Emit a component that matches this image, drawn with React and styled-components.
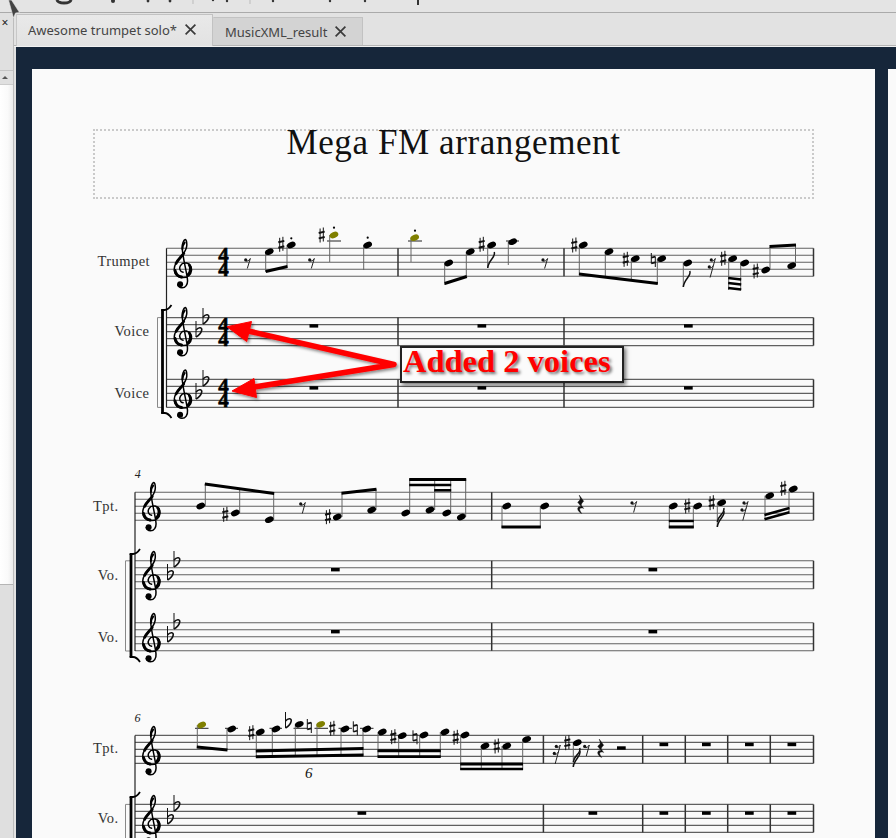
import React from 'react';
import styled, { createGlobalStyle } from 'styled-components';

const Global = createGlobalStyle`
  html, body { margin: 0; padding: 0; background: #e2e2e2; }
  #root { width: 896px; height: 838px; overflow: hidden; }
`;
const Shell = styled.div`
  position: relative; width: 896px; height: 838px; overflow: hidden;
  display: flex; flex-direction: column; background: #e2e2e2;
  font-family: "Noto Sans", sans-serif;
`;
const Toolbar = styled.div`
  height: 12px; flex: none; background: #e4e4e4; border-bottom: 1px solid #aaa; overflow: hidden;
  svg { display: block; }
`;
const Body = styled.div`flex: 1; display: flex; min-height: 0;`;
const Side = styled.aside`
  width: 13px; flex: none; border-right: 1px solid #bdbdbd; display: flex; flex-direction: column; background: #e0e0e0;
`;
const DockClose = styled.div`
  height: 58px; flex: none; border-bottom: 1px solid #c4c4c4; font-size: 12px; line-height: 20px; color: #222; text-align: center; box-sizing: border-box; padding-right: 3px;
`;
const ScrollUp = styled.div`
  height: 13px; flex: none; display: flex; align-items: center; justify-content: center; padding-right: 3px;
  &::before { content: ""; border-left: 3px solid transparent; border-right: 3px solid transparent; border-bottom: 3px solid #555; }
`;
const ScrollBody = styled.div`
  height: 501px; flex: none; background: linear-gradient(90deg, #fff 0%, #fafafa 60%, #ececec 100%); border-bottom: 1px solid #b5b5b5; border-top: 1px solid #ccc; box-sizing: border-box;
`;
const ScrollRest = styled.div`flex: 1; background: #dfdfdf;`;
const Workspace = styled.div`flex: 1; display: flex; flex-direction: column; min-width: 0;`;
const TabBar = styled.div`
  height: 33px; flex: none; display: flex; align-items: flex-end; padding-left: 2px; box-sizing: border-box;
  background: #e2e2e2; border-bottom: 1px solid #b5b5b5; box-shadow: 0 1px 0 #f2f2f2;
`;
const Tab = styled.div`
  display: flex; align-items: center; box-sizing: border-box; color: #444; font-size: 13px;
  width: ${p => p.$active ? 197 : 150}px;
  height: ${p => p.$active ? 32 : 28}px;
  margin-bottom: ${p => p.$active ? -1 : 0}px;
  padding: ${p => p.$active ? '0 0 2px 11px' : '0 0 0 11px'};
  background: ${p => p.$active ? 'linear-gradient(#e9e9e9,#e2e2e2)' : '#d3d3d3'};
  border: 1px solid #c2c2c2; border-bottom: none; border-left-color: ${p => p.$active ? '#c8c8c8' : '#d3d3d3'};
  gap: 8px;
`;
const TabClose = styled.svg`width: 11px; height: 11px; flex: none; stroke: #3a3a3a; stroke-width: 1.7;`;
const Canvas = styled.main`
  flex: 1; margin: 1px 0 0 2px; background: #16263a; display: flex; gap: 13px;
  padding: 22px 0 0 16px; overflow: hidden; min-height: 0;
`;
const Page = styled.section`
  position: relative; flex: none; width: 843px; height: 800px; background: #fafafa; padding-top: 60px; box-sizing: border-box;
`;
const TitleFrame = styled.div`
  margin: 0 61px; height: 70px; box-sizing: border-box; border: 2px dotted #cacaca; text-align: center;
`;
const Title = styled.h1`
  margin: 0; font: 400 35px/24px "Liberation Serif", serif; color: #111; letter-spacing: 0.6px;
`;
const Score = styled.svg`display: block; width: 843px; height: 640px;`;
const Label = styled.text`font: 400 14.5px "Liberation Serif", serif; fill: #333; text-anchor: end; letter-spacing: .45px;`;
const Small = styled.text`font: italic 400 12px "Liberation Serif", serif; fill: #222; text-anchor: middle;`;
const Tuplet = styled.text`font: italic 400 15px "Liberation Serif", serif; fill: #111; text-anchor: middle;`;
const TimeSig = styled.text`font: 700 21px "Liberation Serif", serif; fill: #000; stroke: #000; stroke-width: .6; text-anchor: middle;`;
const Callout = styled.div`
  position: absolute; left: 368px; top: 277px; width: 224px; height: 37px; box-sizing: border-box;
  border: 2px solid #222; background: #fbfbfb; box-shadow: 2px 2px 4px rgba(0,0,0,.55);
  font: 700 32.5px/27px "Liberation Serif", serif; color: #f00; padding-left: 1px; white-space: nowrap;
  text-shadow: 2px 2px 3px rgba(0,0,0,.55);
`;
const Pointer = styled.svg`position: absolute; left: 0; top: 0; pointer-events: none;`;

const LINE = '#606060';
const staves = [
  { top: 248.3, x: 166.5, bars: [398, 564, 813.5] },
  { top: 317.6, x: 166.5, bars: [398, 564, 813.5] },
  { top: 379.4, x: 166.5, bars: [398, 564, 813.5] },
  { top: 492.2, x: 135, bars: [491.7, 813.5] },
  { top: 560.8, x: 135, bars: [491.7, 813.5] },
  { top: 622.8, x: 135, bars: [491.7, 813.5] },
  { top: 735.4, x: 135, bars: [543.4, 642.7, 685.3, 727.7, 770.3, 813.5] },
  { top: 804.4, x: 135, bars: [543.4, 642.7, 685.3, 727.7, 770.3, 813.5] },
];
const clefs = [[173.5, 239], [173.5, 307], [173.5, 369.5], [142, 482], [142, 551], [142, 613], [142, 726], [142, 795]];
const flatPairs = [[198, 205, 331, 318], [198, 205, 393, 380], [169.5, 176, 574, 561], [169.5, 176, 636, 623], [169.5, 176, 818, 805]];
const wholes = [
  [309.5, 324.2], [477.5, 324.2], [684, 324.2], [309.5, 386.2], [477.5, 386.2], [684, 386.2],
  [331, 568], [648.5, 568], [331, 630], [648.5, 630],
  [617, 746.3], [659.5, 742.8], [702, 742.8], [745, 742.8], [787.5, 742.8],
  [357.5, 811.4], [588.5, 811.4], [659.5, 811.4], [702, 811.4], [745, 811.4], [787.5, 811.4],
];
// x, y, stemX, stemEnd, olive
const notes = [
  [269.3,251.7,265.7,272],[291.3,245,287,267],[334,235,329.7,262,1],[367.7,245,363.7,270],
  [414.7,237.7,411,262,1],[448.7,263,444.7,285],[470.3,251.7,466.3,277],[491.7,245,487.7,268],[512.7,241.7,508.3,265],
  [583.3,245,579.3,275],[609,251.7,605.3,277],[635.3,258.7,631.3,280],[661.7,258.7,657.3,284],[687.7,263,683.3,287],
  [732.7,258.7,728.7,290],[744.7,263,740.7,290],[765.7,270,770,247],[791.7,265.7,795.5,245],
  [200.7,506,205.3,484],[235.3,513,239.7,488],[269.3,519.7,273.7,493.5],[337.3,517,342,493.3],[371.7,510,376,489.3],
  [405.7,513,409.7,479],[430,510,434.7,479],[446.7,513,450.7,479],[461.3,517,465.7,479],
  [506.7,506,502,528],[544.7,506,540.3,528],[673.3,506,669.3,528],[697.7,506,693.3,528],[721.7,502.7,717.3,527],
  [769.7,495.7,765,519],[793.3,489,789,512],
  [201.7,725,197.3,748,1],[231.7,729,227,750],[260.3,732,256.3,757],[276,729,272.3,756],[299.3,724.3,295.3,756],[320.7,724.3,317,756,1],[345,729,341,756],[366.7,729,363,756],
  [382.3,732,378,757],[402.3,735.7,398.7,757],[424,735,419.7,757],[445,732,440.3,757],
  [465,735,460.7,770],[485,746,481.3,770],[506.7,746,502,770],[526.7,739.3,522.7,770],[577.3,742.7,573.3,767],
];
const beams = [
  [265.7,271.5,287.5,266.5,3],[444.7,283.5,466.8,276.5,3],[579,274,657.8,283.5,3],
  [728.2,278,741.2,279.5,2.4],[728.2,283,741.2,284.5,2.4],[728.2,288,741.2,289.5,2.4],[769.5,246.5,796,245,3],
  [204.8,484,274.2,493.5,3],[341.5,493.3,376.5,489.3,3],[409.2,479.5,466.2,479.5,3],[409.2,485,451.2,485,2.6],[434.2,490.3,451.2,490.3,2.6],
  [501.5,527,540.8,527,3],[668.8,521,693.8,521,2.4],[668.8,527,693.8,527,3],[764.5,515,789.5,508,2.6],[764.5,519.3,789.5,512.3,2.6],
  [196.8,747,227.5,750,3],[255.8,751,363.5,748.5,3],[255.8,756.7,363.5,755,3],[377.5,750.8,440.8,750.8,3],[377.5,756.6,440.8,756.6,2.6],
  [460.2,764,523,764,3.2],[460.2,769,523,769,2.4],
];
const sharps = [[281.3,244.3],[321.7,235],[481.7,244.3],[574.3,245],[625.7,259.3],[723.3,258.3],[755.7,271],[225.3,514.3],[328,516.7],[687.3,506],[711.7,502.7],[783.3,488.3],[251.3,732.7],[332.3,728.3],[393.3,736.7],[455.7,737.3],[496.7,746],[567.3,742.7]];
const naturals = [[653.3,260],[309.3,726],[355.3,728.3],[415,737.3]];
const ledgers = [[327,341,241],[408,422,241],[506,519,241],[195,208.5,728.3],[225,238,728.3],[269.5,282,728.3],[293.5,307,728.3],[314.5,328,728.3],[338.5,352,728.3],[360,373.5,728.3]];
const dots = [[291.3,238.3],[334,227.7],[367.7,237.7],[415,230.7]];
const rest8 = [[247.7,258.5,10],[311.7,258.5,10],[545,258.5,10],[302.7,502.5,11],[634,501.5,11],[586.7,745,11]];
const rest16 = [[712.3,258.5],[745,501.5],[557.3,745]];
const rest4 = [[580.7,495],[600.7,739]];
const flags = [[487.7,268,1],[683.3,287,1],[717.3,527,2],[573.3,767,2]];
const labels = [
  ['Trumpet',150,265.5],['Voice',149.5,335.5],['Voice',149.5,397.5],
  ['Tpt.',118.5,510.5],['Vo.',118.5,580],['Vo.',118.5,642],['Tpt.',118.5,753],['Vo.',118.5,823],
];
const brackets = [[162.5,157.5,310,413,317.6,407.4,166.5],[131,125.5,554,657,560.8,651,135],[131,125.5,797,900,804.4,894,135]];

const Clef = ({ x, y }) => (
  <g transform={`translate(${x} ${y})`} fill="none" stroke="#000" strokeLinecap="round">
    <path strokeWidth="1.5" d="M9.6 33.2C6.5 32.6 5.3 29.2 7 26.6 8.5 24.2 11 23.5 13 24 16.5 25 18.2 28 18 31.5 17.7 35.5 14 38.6 9.5 38.6 4 38.6.6 34.5.8 29.5 1 23 7 19 10 14.5 12 11.5 13.6 8.5 13.3 5 13.2 2.5 12.6.4 11.8.5 10 1 8.5 5 8.7 9 9 18 13.6 34 14 41 14.4 45.5 12 48.8 8.5 48.8 6 48.8 4.3 47.2 4.3 45.5" />
    <path strokeWidth="3" d="M1.5 31.5C2.2 35 4.7 37.5 8 38" />
    <path strokeWidth="2.8" d="M2.6 24.3C4.4 20.6 8 17.6 10.2 14.5" />
    <path strokeWidth="2.8" d="M15.8 26C17.6 28.4 17.4 33 14.6 35.6" />
    <path strokeWidth="2" d="M11.2 3.5C9.8 5 9 7.5 8.9 10" />
    <circle cx="6.6" cy="45.3" r="3" fill="#000" stroke="none" />
  </g>
);
const Sharp = ({ x, y }) => (
  <g stroke="#111">
    <path strokeWidth="1" d={`M${x-1.6} ${y-6.5}V${y+7.5}M${x+1.6} ${y-7.5}V${y+6.5}`} />
    <path strokeWidth="1.9" d={`M${x-3} ${y-2}L${x+3} ${y-3.4}M${x-3} ${y+3.4}L${x+3} ${y+2}`} />
  </g>
);
const Natural = ({ x, y }) => (
  <g stroke="#111">
    <path strokeWidth="1" d={`M${x-2} ${y-7}V${y+3.5}M${x+2} ${y-3.5}V${y+7}`} />
    <path strokeWidth="1.7" d={`M${x-2} ${y-2.4}L${x+2} ${y-3.4}M${x-2} ${y+3.4}L${x+2} ${y+2.4}`} />
  </g>
);
const Flat = ({ x, y }) => (
  <g fill="none" stroke="#111">
    <path strokeWidth="1" d={`M${x-3} ${y-10}V${y+6}`} />
    <path strokeWidth="1.6" d={`M${x-3} ${y-1}C${x} ${y-4.5} ${x+3.6} ${y-3.5} ${x+2.6} ${y-.5}C${x+2} ${y+2} ${x-.5} ${y+4.5} ${x-3} ${y+6}`} />
  </g>
);
const Rest8 = ({ x, y, h }) => (
  <g>
    <circle cx={x-2} cy={y+1.4} r="1.6" fill="#111" />
    <path fill="none" stroke="#222" strokeWidth="1" d={`M${x-2} ${y+2.4}C${x-.5} ${y+3.2} ${x+1.5} ${y+2} ${x+2.6} ${y}L${x-.4} ${y+h}`} />
  </g>
);
const Rest16 = ({ x, y }) => (
  <g>
    <circle cx={x-1} cy={y+1.4} r="1.6" fill="#111" />
    <circle cx={x-3} cy={y+8.4} r="1.6" fill="#111" />
    <path fill="none" stroke="#222" strokeWidth="1" d={`M${x-1} ${y+2.4}C${x} ${y+3} ${x+2} ${y+2} ${x+3} ${y}L${x-2.2} ${y+19}M${x-3} ${y+9.4}C${x-2} ${y+10} ${x} ${y+9} ${x+1} ${y+7}`} />
  </g>
);
const Rest4 = ({ x, y }) => (
  <g transform={`translate(${x} ${y})`}>
    <path d="M-1.5 0L3 6.2C1.5 7.5 .5 9 .6 10.2L3 13.5C1 12.6-1.3 13-1 14.6-.8 16 .2 17.5 1 18.5-1 17.6-3.2 15.6-3 13.5-2.9 12-1.3 11.2.4 11.6L-3 7.2C-1.5 6-.3 4.6-.4 3.4Z" fill="#111" stroke="#111" strokeWidth=".4" />
  </g>
);
const Flag = ({ x, y, n }) => (
  <g fill="none" stroke="#111" strokeWidth="1.5">
    <path d={`M${x} ${y}C${x+.6} ${y-8} ${x+8.5} ${y-11} ${x+6.5} ${y-16}`} />
    {n > 1 && <path d={`M${x} ${y-5}C${x+.6} ${y-12} ${x+8} ${y-13} ${x+6.5} ${y-19}`} />}
  </g>
);

const Drawing = () => (
  <Score viewBox="32 199 843 640">
    {labels.map(([t, x, y], i) => <Label key={i} x={x} y={y}>{t}</Label>)}
    <Small x={137.7} y={478}>4</Small>
    <Small x={137.4} y={722}>6</Small>
    <Tuplet x={308.7} y={777.5}>6</Tuplet>
    {staves.map((s, i) => (
      <g key={i} stroke={LINE} strokeWidth="1.1">
        {[0,1,2,3,4].map(k => <line key={k} x1={s.x} x2={813.5} y1={s.top + k*7} y2={s.top + k*7} />)}
        {s.bars.map(b => <line key={b} x1={b} x2={b} y1={s.top} y2={s.top + 28} strokeWidth="1.5" stroke="#333" />)}
      </g>
    ))}
    <g stroke="#222" strokeWidth="1.2">
      <line x1="166.5" x2="166.5" y1="248.3" y2="407.4" />
      <line x1="135" x2="135" y1="492.2" y2="651" />
      <line x1="135" x2="135" y1="735.4" y2="838" />
    </g>
    {brackets.map(([tx, lx, y1, y2, t1, t2], i) => (
      <g key={i} fill="none">
        <path stroke="#888" strokeWidth="1" d={`M${tx} ${t1}H${lx}V${t2}H${tx}`} />
        <path stroke="#000" strokeWidth="2.8" d={`M${tx} ${y1}V${y2}`} />
        <path stroke="#000" strokeWidth="1.8" d={`M${tx-1.4} ${y1}H${tx+2}C${tx+5} ${y1} ${tx+7} ${y1-2} ${tx+9} ${y1-5}`} />
        <path stroke="#000" strokeWidth="1.8" d={`M${tx-1.4} ${y2}H${tx+2}C${tx+5} ${y2} ${tx+7} ${y2+2} ${tx+9} ${y2+5}`} />
      </g>
    ))}
    {clefs.map(([x, y], i) => <Clef key={i} x={x} y={y} />)}
    {flatPairs.map(([a, b, ya, yb], i) => <g key={i}><Flat x={a+1} y={ya} /><Flat x={b+1} y={yb} /></g>)}
    {[248.3, 317.6, 379.4].map(t => (
      <TimeSig key={t}>
        <tspan x={223.5} y={t + 14}>4</tspan>
        <tspan x={223.5} y={t + 28}>4</tspan>
      </TimeSig>
    ))}
    {wholes.map(([x, y], i) => <rect key={i} x={x} y={y} width="8.7" height="3.4" fill="#000" />)}
    {ledgers.map(([a, b, y], i) => <line key={i} x1={a} x2={b} y1={y} y2={y} stroke="#222" strokeWidth="1" />)}
    {notes.map(([x, y, sx, e], i) => <line key={i} x1={sx} x2={sx} y1={y} y2={e} stroke="#666" strokeWidth="1" />)}
    {beams.map(([a, b, c, d, t], i) => <line key={i} x1={a} y1={b} x2={c} y2={d} stroke="#000" strokeWidth={t} />)}
    {notes.map(([x, y, , , o], i) => (
      <ellipse key={i} cx={x} cy={y} rx="4.5" ry="3" transform={`rotate(-22 ${x} ${y})`} fill={o ? '#808000' : '#000'} />
    ))}
    {dots.map(([x, y], i) => <circle key={i} cx={x} cy={y} r="1.1" fill="#000" />)}
    {sharps.map(([x, y], i) => <Sharp key={i} x={x} y={y} />)}
    {naturals.map(([x, y], i) => <Natural key={i} x={x} y={y} />)}
    <Flat x={288.5} y={722} />
    {rest8.map(([x, y, h], i) => <Rest8 key={i} x={x} y={y} h={h} />)}
    {rest16.map(([x, y], i) => <Rest16 key={i} x={x} y={y} />)}
    {rest4.map(([x, y], i) => <Rest4 key={i} x={x} y={y} />)}
    {flags.map(([x, y, n], i) => <Flag key={i} x={x} y={y} n={n} />)}
  </Score>
);

const Arrows = () => (
  <Pointer width="843" height="400" viewBox="32 69 843 400">
    <defs>
      <filter id="arrowShadow" x="-10%" y="-20%" width="120%" height="150%">
        <feDropShadow dx="1.5" dy="2" stdDeviation="1.8" floodColor="#000" floodOpacity=".45" />
      </filter>
    </defs>
    <g filter="url(#arrowShadow)" fill="#f00" stroke="#f00" strokeLinejoin="round">
      <path fill="none" strokeWidth="5.5" strokeLinecap="round" d="M244 330L394 364.5L248 388" />
      <path strokeWidth="1" d="M227 326.7L251.5 321.5L246.7 341.5Z" />
      <path strokeWidth="1" d="M232 391L254 378.5L256.5 397.5Z" />
    </g>
  </Pointer>
);

const ToolbarBits = () => (
  <svg width="896" height="12" viewBox="0 0 896 12">
    <path d="M57 0C58 4 70 4 71 0" fill="none" stroke="#333" strokeWidth="3" />
    <g fill="#333">
      <circle cx="113" cy="1" r="2" /><circle cx="148" cy="1" r="1.4" /><circle cx="170" cy="1" r="1.4" />
      <circle cx="213" cy="0" r="1.2" /><circle cx="227" cy="1" r="1.2" /><circle cx="273" cy="1" r="1.2" /><circle cx="330" cy="1" r="1.2" /><circle cx="365" cy="1" r="1.2" />
      <rect x="417" y="0" width="2" height="5" />
    </g>
    <path d="M193 0V4M250 0V4" stroke="#bbb" />
  </svg>
);

const CloseGlyph = () => (
  <TabClose viewBox="0 0 11 11"><path d="M.6.6L10.4 10.4M10.4.6L.6 10.4" /></TabClose>
);

const Cursor = styled.svg`position: absolute; left: 0; top: 0; width: 24px; height: 20px;`;

export default function App() {
  return (
    <Shell>
      <Global />
      <Toolbar><ToolbarBits /></Toolbar>
      <Body>
        <Side>
          <DockClose>×</DockClose>
          <ScrollUp />
          <ScrollBody />
          <ScrollRest />
        </Side>
        <Workspace>
          <TabBar>
            <Tab $active>Awesome trumpet solo*<CloseGlyph /></Tab>
            <Tab>MusicXML_result<CloseGlyph /></Tab>
          </TabBar>
          <Canvas>
            <Page>
              <TitleFrame><Title>Mega FM arrangement</Title></TitleFrame>
              <Drawing />
              <Arrows />
              <Callout>Added 2 voices</Callout>
            </Page>
            <Page />
          </Canvas>
        </Workspace>
      </Body>
      <Cursor viewBox="0 0 24 20"><path d="M8.5 0H11.5L19.5 12.5L15.5 13L13.5 18Z" fill="#444" stroke="#e8e8e8" strokeWidth=".6" /></Cursor>
    </Shell>
  );
}
